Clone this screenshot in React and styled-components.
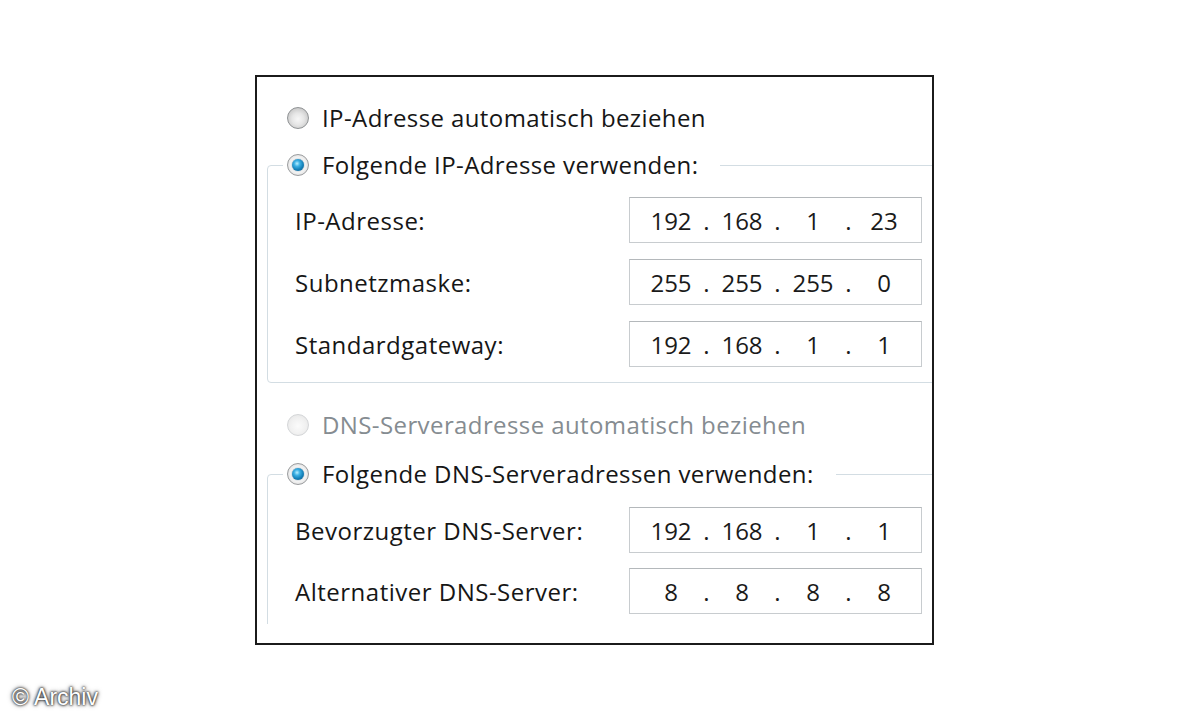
import React from "react";
import styled, { createGlobalStyle, css } from "styled-components";

const GlobalStyle = createGlobalStyle`
  html, body { margin: 0; padding: 0; background: #ffffff; }
  body {
    width: 1200px;
    height: 720px;
    overflow: hidden;
    font-family: "Open Sans", "Noto Sans", sans-serif;
  }
  * { box-sizing: border-box; }
`;

const Page = styled.div`
  position: relative;
  width: 1200px;
  height: 720px;
  padding: 75px 0 0 255px;
`;

const Frame = styled.div`
  width: 679px;
  height: 570px;
  border: 2px solid #1b1b1b;
  background: #ffffff;
  padding-bottom: 19px;
`;

const Clip = styled.div`
  height: 100%;
  overflow: hidden;
  padding: 18px 0 0 10px;
`;

const RadioRow = styled.div`
  display: flex;
  align-items: center;
  height: 46px;
  margin-left: ${(p) => p.$indent || 0}px;
  margin-top: ${(p) => p.$top || 0}px;
`;

const Radio = styled.span`
  position: relative;
  flex: none;
  width: 22px;
  height: 22px;
  border-radius: 50%;
  margin-right: 13px;
  ${(p) =>
    p.$state === "off" &&
    css`
      border: 1px solid #8f9294;
      background: radial-gradient(circle at 50% 55%, #f7f7f7 0, #e6e6e6 40%, #c9c9c9 75%, #b3b3b3 100%);
    `}
  ${(p) =>
    p.$state === "disabled" &&
    css`
      border: 1px solid #d4d6d8;
      background: radial-gradient(circle at 50% 55%, #fbfbfb 0, #f1f1f1 50%, #e2e2e2 100%);
    `}
  ${(p) =>
    p.$state === "on" &&
    css`
      border: 1px solid #9a9c9e;
      background: radial-gradient(circle, #ffffff 0, #f2f2f2 55%, #cfcfcf 100%);
      &::after {
        content: "";
        position: absolute;
        left: 4px;
        top: 4px;
        width: 12px;
        height: 12px;
        border-radius: 50%;
        background: radial-gradient(circle at 42% 38%, #b9efff 0, #3cb0e4 28%, #137fb7 60%, #0a5583 100%);
        box-shadow: 0 0 1px #0a4a70;
      }
    `}
`;

const RadioText = styled.span`
  font-size: 24px;
  line-height: 1;
  white-space: nowrap;
  color: ${(p) => (p.$disabled ? "#858c91" : "#161616")};
  letter-spacing: 0.4px;
`;

const Group = styled.fieldset`
  margin: ${(p) => p.$top || 0}px -30px 0 0;
  padding: 0;
  min-width: 0;
  border: 1px solid #d3dde3;
  border-radius: 4px;
`;

const Legend = styled.legend`
  display: flex;
  align-items: center;
  height: 36px;
  margin-left: 15px;
  padding: 0 22px 0 4px;
`;

const Fields = styled.div`
  display: grid;
  grid-template-columns: 334px 293px;
  grid-auto-rows: 46px;
  row-gap: ${(p) => p.$gap}px;
  padding: ${(p) => p.$padTop}px 0 ${(p) => p.$padBottom}px 27px;
`;

const Label = styled.span`
  display: flex;
  align-items: center;
  font-size: 24px;
  color: #161616;
  white-space: nowrap;
  letter-spacing: 0.5px;
`;

const IpBox = styled.div`
  display: flex;
  align-items: center;
  height: 46px;
  padding-left: 16px;
  border: 1px solid #c8cccf;
  border-top-color: #b4b8bb;
  background: #ffffff;
  font-size: 24px;
  color: #1a1a1a;
`;

const Segment = styled.span`
  width: 50px;
  text-align: center;
`;

const Dot = styled.span`
  width: 21px;
  text-align: center;
`;

const Credit = styled.div`
  position: absolute;
  left: 12px;
  top: 684px;
  font-family: "Liberation Sans", Arial, sans-serif;
  font-size: 23px;
  color: #ffffff;
  letter-spacing: 0;
  text-shadow: 0 0 2px #222, 0 0 3px #333, 0 0 5px #666;
`;

function IpField({ value }) {
  const parts = value.split(".");
  return (
    <IpBox>
      {parts.map((p, i) => (
        <React.Fragment key={i}>
          <Segment>{p}</Segment>
          {i < parts.length - 1 && <Dot>.</Dot>}
        </React.Fragment>
      ))}
    </IpBox>
  );
}

const ipRows = [
  ["IP-Adresse:", "192.168.1.23"],
  ["Subnetzmaske:", "255.255.255.0"],
  ["Standardgateway:", "192.168.1.1"],
];

const dnsRows = [
  ["Bevorzugter DNS-Server:", "192.168.1.1"],
  ["Alternativer DNS-Server:", "8.8.8.8"],
];

export default function App() {
  return (
    <>
      <GlobalStyle />
      <Page>
        <Frame>
          <Clip>
            <RadioRow $indent={20}>
              <Radio $state="off" />
              <RadioText>IP-Adresse automatisch beziehen</RadioText>
            </RadioRow>
            <Group $top={6}>
              <Legend>
                <Radio $state="on" />
                <RadioText>Folgende IP-Adresse verwenden:</RadioText>
              </Legend>
              <Fields $gap={16} $padTop={14} $padBottom={15}>
                {ipRows.map(([l, v]) => (
                  <React.Fragment key={l}>
                    <Label>{l}</Label>
                    <IpField value={v} />
                  </React.Fragment>
                ))}
              </Fields>
            </Group>
            <RadioRow $indent={20} $top={19}>
              <Radio $state="disabled" />
              <RadioText $disabled>DNS-Serveradresse automatisch beziehen</RadioText>
            </RadioRow>
            <Group $top={8}>
              <Legend>
                <Radio $state="on" />
                <RadioText>Folgende DNS-Serveradressen verwenden:</RadioText>
              </Legend>
              <Fields $gap={15} $padTop={15} $padBottom={40}>
                {dnsRows.map(([l, v]) => (
                  <React.Fragment key={l}>
                    <Label>{l}</Label>
                    <IpField value={v} />
                  </React.Fragment>
                ))}
              </Fields>
            </Group>
          </Clip>
        </Frame>
        <Credit>© Archiv</Credit>
      </Page>
    </>
  );
}
